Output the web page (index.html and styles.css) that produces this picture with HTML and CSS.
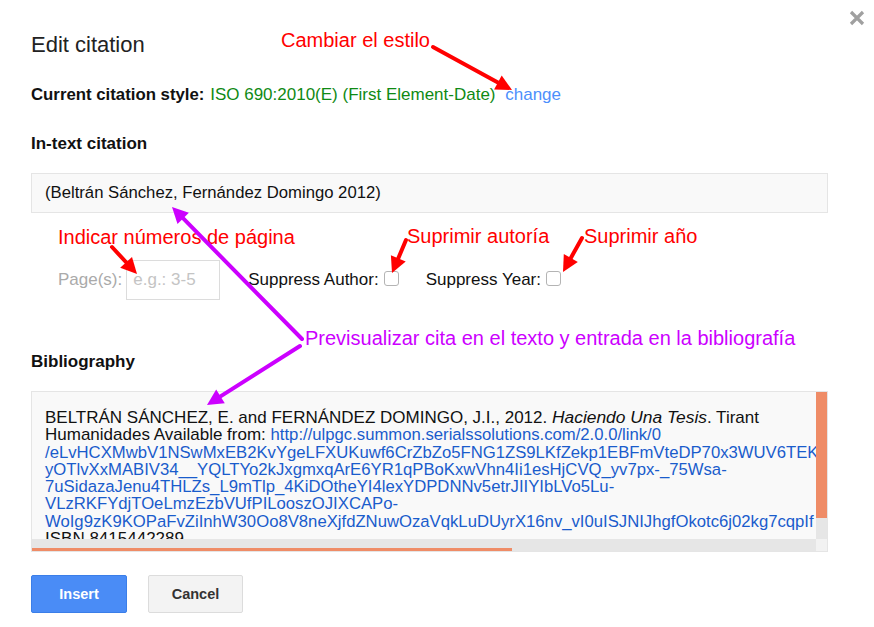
FILE: index.html
```html
<!DOCTYPE html>
<html lang="en">
<head>
    <meta charset="UTF-8">
    <title>Edit citation</title>
    <link rel="stylesheet" href="styles.css">
</head>
<body>
    <div class="dialog">
        <div class="close-btn">
            <svg width="16" height="16" viewBox="0 0 16 16"><path d="M2 2 L14 14 M14 2 L2 14" stroke="#a0a0a0" stroke-width="3.2"/></svg>
        </div>
        <div class="dialog-title">Edit citation</div>
        <div class="style-line">
            <b>Current citation style:</b>
            <span class="style-name">ISO 690:2010(E) (First Element-Date)</span>
            <a class="change-link">change</a>
        </div>
        <div class="section-heading intext-heading">In-text citation</div>
        <div class="intext-box">(Beltrán Sánchez, Fernández Domingo 2012)</div>
        <div class="options-row">
            <span class="pages-label">Page(s):</span>
            <input type="text" class="pages-input" placeholder="e.g.: 3-5" />
            <span class="option-label author-label">Suppress Author:</span>
            <input type="checkbox" class="option-check" />
            <span class="option-label year-label">Suppress Year:</span>
            <input type="checkbox" class="option-check" />
        </div>
        <div class="section-heading bib-heading">Bibliography</div>
        <div class="bib-box">
            <div class="bib-content">
                BELTRÁN SÁNCHEZ, E. and FERNÁNDEZ DOMINGO, J.I., 2012. <i>Haciendo Una Tesis</i>. Tirant<br>
                Humanidades Available from: <a class="bib-link">http://ulpgc.summon.serialssolutions.com/2.0.0/link/0</a><br>
                <a class="bib-link">/eLvHCXMwbV1NSwMxEB2KvYgeLFXUKuwf6CrZbZo5FNG1ZS9LKfZekp1EBFmVteDP70x3WUV6TEK-</a><br>
                <a class="bib-link">yOTlvXxMABIV34__YQLTYo2kJxgmxqArE6YR1qPBoKxwVhn4Ii1esHjCVQ_yv7px-_75Wsa-</a><br>
                <a class="bib-link">7uSidazaJenu4THLZs_L9mTlp_4KiDOtheYI4lexYDPDNNv5etrJIIYIbLVo5Lu-</a><br>
                <a class="bib-link">VLzRKFYdjTOeLmzEzbVUfPILooszOJIXCAPo-</a><br>
                <a class="bib-link">WoIg9zK9KOPaFvZiInhW30Oo8V8neXjfdZNuwOzaVqkLuDUyrX16nv_vI0uISJNIJhgfOkotc6j02kg7cqpIf</a><br>
                ISBN 8415442289
            </div>
            <div class="vscroll"><div class="vthumb"></div></div>
            <div class="hscroll"><div class="hthumb"></div></div>
            <div class="scroll-corner"></div>
        </div>
        <div class="buttons">
            <button class="btn-insert">Insert</button>
            <button class="btn-cancel">Cancel</button>
        </div>
    </div>

    <!-- annotations drawn over the dialog -->
    <div class="note note-red note-style">Cambiar el estilo</div>
    <div class="note note-red note-pages">Indicar números de página</div>
    <div class="note note-red note-author">Suprimir autoría</div>
    <div class="note note-red note-year">Suprimir año</div>
    <div class="note note-magenta note-preview">Previsualizar cita en el texto y entrada en la bibliografía</div>
    <svg class="arrows" width="874" height="627" viewBox="0 0 874 627">
        <g stroke="#ff0000" stroke-width="4" stroke-linecap="round" fill="#ff0000">
            <line x1="433" y1="47" x2="498.8" y2="82.9"/>
            <polygon stroke="none" points="494.1,89.4 512,90 501.7,75.4"/>
            <line x1="112" y1="247" x2="126.8" y2="263"/>
            <polygon stroke="none" points="120.2,267.7 137,274 132,256.9"/>
            <line x1="406" y1="240" x2="397.9" y2="259.2"/>
            <polygon stroke="none" points="390.9,255.2 392,273 405.7,261.4"/>
            <line x1="582" y1="238" x2="570.3" y2="258.9"/>
            <polygon stroke="none" points="563.8,254.1 563,272 577.8,261.9"/>
        </g>
        <g stroke="#cc00ff" stroke-width="4" stroke-linecap="round" fill="#cc00ff">
            <line x1="302" y1="339" x2="182.5" y2="217.7"/>
            <polygon stroke="none" points="188.9,212.8 172,207 177.5,224"/>
            <line x1="300" y1="346" x2="219.7" y2="396.9"/>
            <polygon stroke="none" points="216.2,389.6 207,405 224.8,403.2"/>
        </g>
    </svg>
</body>
</html>
```

FILE: styles.css
```css
body {
    margin: 0;
    background-color: #fff;
    font-family: "Liberation Sans", Arial, sans-serif;
    font-size: 17px;
    color: #222;
}
.dialog {
    position: relative;
    width: 797px;
    padding: 33px 46px 0 31px;
}
.close-btn {
    position: absolute;
    top: 10px;
    right: 9px;
}
.dialog-title {
    font-size: 22px;
    line-height: 24px;
    color: #222;
}
.style-line {
    margin-top: 29px;
    line-height: 18px;
}
.style-line b {
    color: #111;
    font-size: 16.8px;
}
.style-name {
    color: #0f8a14;
    margin-left: 1px;
}
.change-link {
    color: #4d8ffc;
    margin-left: 5px;
}
.section-heading {
    font-weight: bold;
    line-height: 18px;
    color: #111;
}
.intext-heading {
    margin-top: 31px;
}
.intext-box {
    margin-top: 20px;
    background-color: #f9f9f9;
    border: 1px solid #e5e5e5;
    padding: 10px 13px;
    line-height: 18px;
    color: #111;
    font-size: 16.7px;
}
.options-row {
    margin-top: 47px;
    height: 40px;
    display: flex;
    align-items: center;
    padding-left: 27px;
}
.pages-label {
    color: #aaa;
}
.pages-input {
    box-sizing: border-box;
    width: 94px;
    height: 40px;
    margin-left: 4px;
    border: 1px solid #dcdcdc;
    padding: 0 6px;
    font-family: inherit;
    font-size: 17px;
    outline: none;
}
.pages-input::placeholder {
    color: #c4c4c4;
}
.option-label {
    color: #111;
}
.author-label {
    margin-left: 28px;
}
.year-label {
    margin-left: 27px;
}
.option-check {
    appearance: none;
    -webkit-appearance: none;
    width: 15px;
    height: 15px;
    margin: -4px 0 0 5px;
    border: 1px solid #b4b4b4;
    border-radius: 3px;
    background-color: #fff;
}
.bib-heading {
    margin-top: 53px;
}
.bib-box {
    margin-top: 20px;
    height: 159px;
    border: 1px solid #e5e5e5;
    background-color: #f9f9f9;
    display: grid;
    grid-template-columns: 1fr 11px;
    grid-template-rows: 1fr 12px;
}
.bib-content {
    overflow: hidden;
    white-space: nowrap;
    padding: 17px 0 0 13px;
    line-height: 17.3px;
    color: #111;
}
.bib-content i {
    font-size: 17.4px;
}
.bib-link {
    color: #1a5ccc;
    font-size: 16.7px;
}
.vscroll {
    background-color: #e6e6e6;
}
.vthumb {
    height: 126px;
    background-color: #ef8c67;
}
.hscroll {
    background-color: #e6e6e6;
    display: flex;
    align-items: flex-end;
}
.hthumb {
    width: 480px;
    height: 3px;
    background-color: #ef8c67;
}
.scroll-corner {
    background-color: #f2f2f2;
}
.buttons {
    margin-top: 23px;
    display: flex;
    gap: 21px;
}
.btn-insert {
    width: 96px;
    height: 38px;
    background-color: #4a8cf6;
    border: 1px solid #3b7ee8;
    border-radius: 2px;
    color: #fff;
    font-family: inherit;
    font-weight: bold;
    font-size: 14.5px;
}
.btn-cancel {
    width: 95px;
    height: 38px;
    background-color: #f3f3f3;
    border: 1px solid #dcdcdc;
    border-radius: 2px;
    color: #333;
    font-family: inherit;
    font-weight: bold;
    font-size: 14.5px;
}
.note {
    position: absolute;
    font-size: 20px;
    line-height: 24px;
    white-space: nowrap;
}
.note-red {
    color: #ff0000;
}
.note-magenta {
    color: #cc00ff;
}
.note-style {
    left: 281px;
    top: 28px;
}
.note-pages {
    left: 58px;
    top: 225px;
}
.note-author {
    left: 407px;
    top: 224px;
}
.note-year {
    left: 584px;
    top: 224px;
}
.note-preview {
    left: 305px;
    top: 326px;
}
.arrows {
    position: absolute;
    left: 0;
    top: 0;
    pointer-events: none;
}
```
